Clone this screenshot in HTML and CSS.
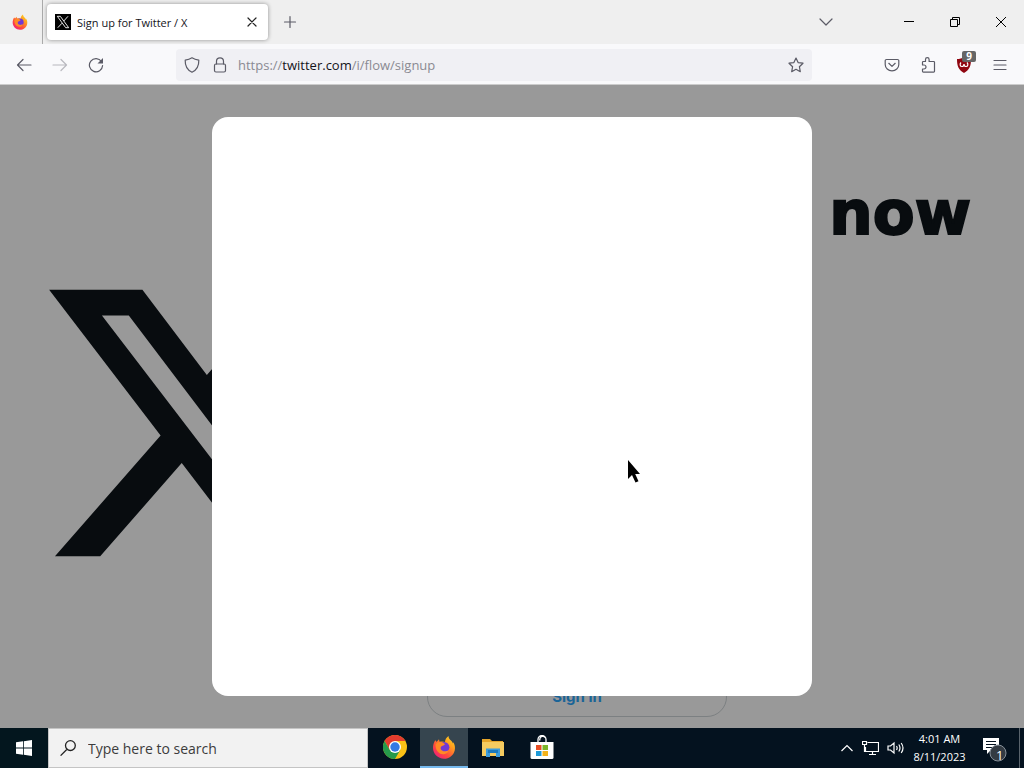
FILE: index.html
```html
<!DOCTYPE html>
<html lang="en">
<head>
<meta charset="utf-8">
<title>Sign up for Twitter / X</title>
<link rel="stylesheet" href="styles.css">
</head>
<body>
<svg class="defs" width="0" height="0" aria-hidden="true">
  <defs>
    <linearGradient id="flame" x1="1" y1="0" x2="0.2" y2="1">
      <stop offset="0" stop-color="#ffe226"/><stop offset=".35" stop-color="#ffa01e"/><stop offset=".7" stop-color="#ff4a3c"/><stop offset="1" stop-color="#ef1d7c"/>
    </linearGradient>
    <symbol id="firefox" viewBox="0 0 24 24">
      <path fill="url(#flame)" d="M3.2 5.2c.7.5 1.100 1.100 1.300 1.700L7 4.200l.5 2.600c2-.6 4-.5 5.500.3C13 4.400 14.500 2.300 16.500.9c0 2.500 1.600 3.600 3 5.200.8.900 1.200 1.600 1.400 2.300l.3-1.200c1.600 2.200 2.200 5.200 1.500 8.200-1.200 5-5.600 8.300-10.700 8.300C5.900 23.700 1 18.900 1 12.800c0-2.900.9-5.500 2.200-7.600z"/>
      <circle cx="12" cy="12.300" r="5.400" fill="#7139d4"/>
      <path fill="#ff8a25" d="M3.500 9.500c1.500-2.300 4.500-3 7-2 1 .4 1.900 1 2.500 1.800-1.200 1.700-3.500 1.200-4.200 2.700-.7 2 .6 3.700 2.700 4.200 2 .5 3.300-.5 5-.8-1 2.700-3.200 4-5.700 3.800-4-.2-7.300-3.700-7.300-9.700z"/>
    </symbol>
    <symbol id="xlogo" viewBox="0 0 24 24">
      <path d="M18.244 2.25h3.308l-7.227 8.26 8.502 11.24H16.17l-5.214-6.817L4.99 21.75H1.68l7.73-8.835L1.254 2.25H8.08l4.713 6.231zm-1.161 17.52h1.833L7.084 4.126H5.117z"/>
    </symbol>
  </defs>
</svg>

<header class="browser">
  <div class="tabstrip">
    <button class="ff-view" aria-label="Firefox View"><svg width="16" height="16"><use href="#firefox"/></svg></button>
    <div class="tab">
      <svg class="favicon" viewBox="0 0 16 16"><path fill="#000" d="M0 0h16v16H0z"/><path fill="none" stroke="#fff" stroke-width=".9" d="M2.300 2.300h3l8.400 11.400h-3zM13 2.300 8.800 7M7 9.200 2.800 13.700"/></svg>
      <span class="tab-title">Sign up for Twitter / X</span>
      <button class="tab-close" aria-label="Close tab"><svg class="ico" width="10" height="10" viewBox="0 0 10 10"><path d="m1 1 8 8M9 1 1 9"/></svg></button>
    </div>
    <button class="icon-btn new-tab" aria-label="New tab"><svg class="ico" viewBox="0 0 16 16"><path d="M8 2.500v11M2.500 8h11"/></svg></button>
    <div class="window-controls">
      <button class="tabs-list" aria-label="List all tabs"><svg class="ico" viewBox="0 0 16 16"><path d="m2 5 6 6 6-6"/></svg></button>
      <button aria-label="Minimize"><svg class="caption" viewBox="0 0 16 16"><path d="M3 7.500h10"/></svg></button>
      <button aria-label="Restore"><svg class="caption" viewBox="0 0 16 16"><path d="M3.500 5.500h7v7h-7zM5.500 5.500v-2h7v7h-2"/></svg></button>
      <button aria-label="Close"><svg class="caption" viewBox="0 0 16 16"><path d="m3 3 10 10M13 3 3 13"/></svg></button>
    </div>
  </div>
  <div class="toolbar">
    <nav class="nav">
      <button class="icon-btn" aria-label="Back"><svg class="ico" viewBox="0 0 16 16"><path d="M15 8H1.500M7 2.500 1.500 8 7 13.500"/></svg></button>
      <button class="icon-btn" aria-label="Forward" disabled><svg class="ico" viewBox="0 0 16 16"><path d="M1 8h13.500M9 2.500 14.500 8 9 13.500"/></svg></button>
      <button class="icon-btn" aria-label="Reload"><svg class="ico" viewBox="0 0 16 16"><path d="M13.500 4.500A6.600 6.600 0 1 0 14.600 8.500"/><path class="solid" d="M15 1v5.500H9.500z"/></svg></button>
    </nav>
    <div class="urlbar">
      <button aria-label="Tracking protection"><svg class="ico" viewBox="0 0 16 16"><path d="M8 .8c2 1.300 4 2 6.800 2.400.2 5.300-1.500 9.500-6.800 12-5.300-2.500-7-6.700-6.800-12C4 2.800 6 2.100 8 .8z"/></svg></button>
      <button aria-label="Site information"><svg class="ico" viewBox="0 0 16 16"><path d="M4.500 7V4.300a3.500 3.500 0 0 1 7 0V7"/><rect x="2.500" y="7" width="11" height="8" rx="1.500"/></svg></button>
      <a class="url" href="#">https://<b>twitter.com</b>/i/flow/signup</a>
      <button aria-label="Bookmark this page"><svg class="ico" viewBox="0 0 16 16"><path d="m8 1 2.100 4.600 4.900.6-3.600 3.500.9 5L8 12.300l-4.300 2.400.9-5L1 6.200l4.900-.6z"/></svg></button>
    </div>
    <div class="extensions">
      <button class="icon-btn" aria-label="Save to Pocket"><svg class="ico" viewBox="0 0 16 16"><path d="M2.500 2.500h11a1.300 1.300 0 0 1 1.300 1.300V7.500a6.800 6.300 0 0 1-13.600 0V3.800A1.300 1.300 0 0 1 2.500 2.500zM4.800 6.300 8 9.400l3.200-3.100"/></svg></button>
      <button class="icon-btn" aria-label="Extensions"><svg class="ico" viewBox="0 0 16 16"><path d="M5.500 4.500V2.500a1.800 1.800 0 0 1 3.600 0v2h4.600a.8.800 0 0 1 .8.800v9a.8.800 0 0 1-.8.800H3.300a.8.800 0 0 1-.8-.8V12H4a2 2 0 0 0 0-4H2.500V5.300a.8.800 0 0 1 .8-.8z"/></svg></button>
      <button class="icon-btn ublock" aria-label="uBlock Origin"><svg viewBox="0 0 16 16"><path fill="#900610" d="M8 0c2 1.500 4.500 2 7 2 0 7-1.500 11-7 14C2.500 13 1 9 1 2c2.500 0 5-.5 7-2z"/><path fill="none" stroke="#fff" stroke-width="1.200" d="M5 5.500c-1.500 1.500-1 4 1 4 1.300 0 2-.8 2-2.500 0 1.700.7 2.500 2 2.500 2 0 2.500-2.500 1-4"/></svg><span class="count">9</span></button>
      <button class="icon-btn" aria-label="Menu"><svg class="ico" viewBox="0 0 16 16"><path d="M2 3.500h12M2 8h12M2 12.500h12"/></svg></button>
    </div>
  </div>
</header>

<main class="page">
  <div class="brand"><svg class="brand-logo"><use href="#xlogo"/></svg></div>
  <section class="intro">
    <h1>now</h1>
    <a class="sign-in" href="#">Sign in</a>
  </section>
  <div class="dialog" role="dialog" aria-modal="true" aria-label="Sign up">
    <svg class="cursor" width="14" height="24" viewBox="0 0 14 24"><path d="M1 0v19l4-4 3.500 7.500 3-1.300-3.300-7.200H13z"/></svg>
  </div>
</main>

<footer class="taskbar">
  <button class="start" aria-label="Start"><svg width="16" height="16" viewBox="0 0 16 16"><path fill="#fff" d="M0 2.300 7 1.300v6.200H0zM7.800 1.200 16 0v7.500H7.800zM0 8.400h7v6.300l-7-1zM7.800 8.400H16V16l-8.200-1.200z"/></svg></button>
  <label class="search">
    <svg width="16" height="16" viewBox="0 0 16 16"><path fill="none" stroke="#222" stroke-width="1.300" d="M15.300 5.600a4.900 4.900 0 1 1-9.800 0 4.900 4.900 0 0 1 9.800 0zM7 9.200.6 15.600"/></svg>
    <input type="text" placeholder="Type here to search" aria-label="Search">
  </label>
  <div class="apps">
    <button aria-label="Chrome"><svg viewBox="0 0 24 24"><circle cx="12" cy="12" r="12" fill="#fbc116"/><path fill="#e33b2e" d="M12 12V6h10.400A12 12 0 0 0 1.600 6l5.200 9z"/><path fill="#269a4b" d="M1.600 6A12 12 0 0 0 12 24l5.200-9L12 12l-5.200 3z"/><circle cx="12" cy="12" r="6" fill="#fff"/><circle cx="12" cy="12" r="4.700" fill="#3379e4"/></svg></button>
    <button class="active" aria-label="Firefox"><svg><use href="#firefox"/></svg></button>
    <button aria-label="File Explorer"><svg viewBox="0 0 24 24"><path fill="#e6a52a" d="M1 4h8l2 2h11v5H1z"/><path fill="#f5cb60" d="M1 7h22v14H1z"/><path fill="#3b9bdc" d="M5 13.500h14V22h-4v-4H9v4H5z"/><path fill="#1c79bd" d="M7 15h10v3H7z"/></svg></button>
    <button aria-label="Microsoft Store"><svg viewBox="0 0 24 24"><path fill="none" stroke="#fff" stroke-width="1.300" d="M8 7V4.500a4 4 0 0 1 8 0V7M9.800 5.500V4.200a3 3 0 0 1 5.500-1.600"/><path fill="#fff" d="M.5 7h23v15.500a1.500 1.500 0 0 1-1.500 1.500H2a1.500 1.500 0 0 1-1.500-1.500z"/><path fill="#e84e24" d="M6 10h5.500v5H6z"/><path fill="#7db62b" d="M12.500 10H18v5h-5.500z"/><path fill="#1d9ad8" d="M6 16h5.500v5H6z"/><path fill="#f3b21b" d="M12.500 16H18v5h-5.500z"/></svg></button>
  </div>
  <div class="tray">
    <button aria-label="Show hidden icons"><svg class="tray-ico" width="14" height="16" viewBox="0 0 14 16"><path d="m1.500 11 5.500-5.500 5.500 5.500"/></svg></button>
    <button aria-label="Network"><svg class="tray-ico" width="17" height="16" viewBox="0 0 17 16"><path d="M5.500 2.500h11v9H3.500V7M10.500 11.500v3M7 14.500h7M.5 1.500h4v3h-4zM2.500 4.500v7h1"/></svg></button>
    <button aria-label="Volume"><svg class="tray-ico" width="18" height="16" viewBox="0 0 18 16"><path d="M1 6h2.500L7 3v10L3.500 10H1zM9.500 6q1.300 2 0 4M11.800 4.500q2.400 3.500 0 7M14.200 3q3.600 5 0 10"/></svg></button>
    <time class="clock" datetime="2023-08-11T04:01"><span>4:01 AM</span><span>8/11/2023</span></time>
    <button class="notify" aria-label="Notifications"><svg width="25" height="26" viewBox="0 0 25 26"><path fill="#fff" d="M1 2h16v12H9l-4 4v-4H1z"/><path stroke="#04121f" d="M4 5.500h10M4 8.500h10M4 11.500h6"/><circle cx="16" cy="17" r="8" fill="#333b43" stroke="#87909a"/></svg><span class="badge">1</span></button>
  </div>
</footer>
</body>
</html>
```
FILE: styles.css
```css
* { box-sizing: border-box; }

body {
  margin: 0;
  height: 100vh;
  display: flex;
  flex-direction: column;
  overflow: hidden;
  font-family: "Open Sans", "Noto Sans", sans-serif;
  font-size: 11px;
}

button {
  display: flex;
  align-items: center;
  justify-content: center;
  padding: 0;
  border: 0;
  background: none;
  color: inherit;
  font: inherit;
}

a { text-decoration: none; }
.defs { position: absolute; }

.ico {
  fill: none;
  stroke: #5b5b66;
  stroke-width: 1.2;
  stroke-linejoin: round;
  stroke-linecap: round;
}
.solid { fill: #5b5b66; stroke: none; }
.caption { fill: none; stroke: #000; }

/* Browser chrome */
.tabstrip {
  display: flex;
  align-items: center;
  height: 44px;
  background: #efefef;
}
.ff-view {
  width: 43px;
  height: 44px;
  padding-right: 3px;
  border-right: 1px solid #aaa;
}
.tab {
  display: flex;
  align-items: center;
  width: 221px;
  height: 36px;
  margin-left: 4px;
  padding: 0 8px;
  gap: 6px;
  border-radius: 4px;
  background: #fff;
  box-shadow: 0 0 4px rgba(0, 0, 0, 0.4);
}
.favicon { width: 16px; height: 16px; }
.tab-title { flex: 1; white-space: nowrap; color: #15141a; }
.tab-close { width: 16px; height: 16px; }
.tab-close .ico { stroke: #222; }
.icon-btn { width: 36px; height: 36px; }
.icon-btn svg, .urlbar svg { width: 16px; height: 16px; }
.new-tab { margin-left: 4px; }
.window-controls { display: flex; margin-left: auto; }
.window-controls button { width: 46px; height: 44px; }
.window-controls svg { width: 16px; height: 16px; }
.window-controls .tabs-list { width: 36px; margin-right: 42px; }

.toolbar {
  display: flex;
  align-items: center;
  height: 41px;
  padding: 1px 6px 0;
  background: #f9f9fb;
  border-bottom: 1px solid #ccc;
}
.nav, .extensions { display: flex; }
.nav button:disabled { opacity: 0.4; }
.urlbar {
  display: flex;
  align-items: center;
  flex: 1;
  height: 32px;
  margin: 0 62px;
  padding: 0 8px;
  gap: 12px;
  border-radius: 4px;
  background: #f0f0f4;
}
.url {
  flex: 1;
  margin-left: -2px;
  font-size: 13px;
  color: #8a8a92;
}
.url b { font-weight: 400; color: #15141a; }
.ublock { position: relative; }
.count {
  position: absolute;
  top: 4px;
  right: 6px;
  width: 14px;
  border-radius: 2px;
  background: #666;
  color: #fff;
  font-size: 10px;
  font-weight: 700;
  line-height: 11px;
}

/* Page behind the dialog */
.page {
  position: relative;
  flex: 1;
  min-height: 0;
  display: flex;
  overflow: hidden;
  background: #999;
}
.brand {
  display: flex;
  align-items: center;
  width: 394px;
  padding: 33px 0 0 32px;
}
.brand-logo { width: 328px; height: 328px; fill: #080c0f; }
.intro {
  flex: 1;
  display: flex;
  flex-direction: column;
  justify-content: space-between;
  align-items: flex-start;
  padding: 90px 53px 11px 33px;
}
.intro h1 {
  align-self: flex-end;
  margin: 0;
  font-family: "DejaVu Sans", sans-serif;
  font-size: 61px;
  font-weight: 700;
  line-height: 76px;
  color: #080c0f;
  -webkit-text-stroke: 2px #080c0f;
}
.sign-in {
  width: 300px;
  border: 1px solid #7c8082;
  border-radius: 20px;
  font-family: Inter, sans-serif;
  font-size: 15px;
  font-weight: 700;
  line-height: 38px;
  text-align: center;
  color: #1a6497;
}
.dialog {
  position: absolute;
  inset: 32px 0;
  width: 600px;
  margin: 0 auto;
  border-radius: 16px;
  background: #fff;
}
.cursor { position: absolute; left: 415px; top: 343px; }

/* Taskbar */
.taskbar {
  display: flex;
  height: 40px;
  background: #04121f;
  color: #fff;
}
.start { width: 48px; background: #03161e; }
.search {
  display: flex;
  align-items: center;
  width: 320px;
  padding: 0 11px;
  gap: 12px;
  border: 1px solid #c4c4c4;
  background: #f2f2f2;
}
.search input {
  flex: 1;
  min-width: 0;
  padding: 0;
  border: 0;
  background: none;
  font-family: inherit;
  font-size: 14px;
}
.search input::placeholder { color: #3c3c3c; opacity: 1; }
.apps { display: flex; padding-left: 3px; gap: 1px; }
.apps button { width: 48px; border-bottom: 2px solid transparent; }
.apps .active { background: #36454f; border-color: #76b9ed; }
.apps svg { width: 24px; height: 24px; }
.tray { display: flex; align-items: center; margin-left: auto; padding-right: 4px; gap: 8px; }
.tray-ico { fill: none; stroke: #fff; stroke-width: 1.2; }
.clock {
  display: flex;
  flex-direction: column;
  align-items: center;
  width: 53px;
  line-height: 18px;
}
.notify {
  position: relative;
  align-self: stretch;
  width: 46px;
  padding: 2px 4px 0 0;
  border-right: 1px solid #59636c;
}
.badge { position: absolute; left: 22px; top: 19px; font-size: 13px; line-height: 16px; }
```
